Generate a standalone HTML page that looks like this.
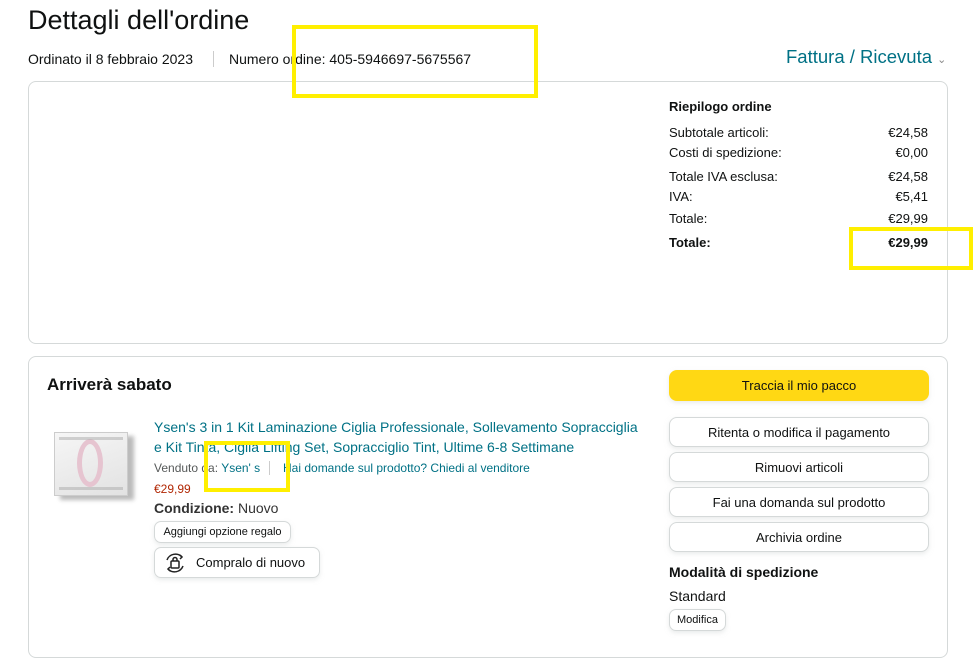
<!DOCTYPE html>
<html><head><meta charset="utf-8"><style>
*{margin:0;padding:0;box-sizing:border-box}
body{width:974px;height:668px;background:#fff;font-family:"Liberation Sans",Arial,sans-serif;color:#0f1111;position:relative;overflow:hidden;font-size:14px}
.a{position:absolute;white-space:nowrap}
.card{position:absolute;border:1px solid #d5d9d9;border-radius:8px;left:28px;width:920px}
.btn{position:absolute;left:669px;width:260px;height:30px;border:1px solid #d5d9d9;border-radius:8px;text-align:center;line-height:29px;font-size:13px;box-shadow:0 2px 5px rgba(213,217,217,.5);background:#fff}
.yb{position:absolute;border:4px solid #ffef00}
.teal{color:#007185}
</style></head><body>
<div class="a" style="left:28px;top:5px;font-size:27px;color:#0f1111">Dettagli dell'ordine</div>
<div class="a" style="left:28px;top:51px;font-size:14px">Ordinato il 8 febbraio 2023</div>
<div class="a" style="left:213px;top:51px;width:1px;height:16px;background:#ccc"></div>
<div class="a" style="left:229px;top:51px;font-size:14px">Numero ordine: 405-5946697-5675567</div>
<div class="a teal" style="left:786px;top:46px;font-size:18.5px">Fattura / Ricevuta <span style="font-size:11px;color:#888">&#8964;</span></div>

<div class="card" style="top:81px;height:263px"></div>
<div class="a" style="left:669px;top:99px;font-size:13px;font-weight:bold">Riepilogo ordine</div>
<div class="a" style="left:669px;top:123px;font-size:13px;line-height:20px">Subtotale articoli:<br>Costi di spedizione:</div>
<div class="a" style="right:46px;top:123px;font-size:13px;line-height:20px;text-align:right">€24,58<br>€0,00</div>
<div class="a" style="left:669px;top:167px;font-size:13px;line-height:20px">Totale IVA esclusa:<br>IVA:</div>
<div class="a" style="right:46px;top:167px;font-size:13px;line-height:20px;text-align:right">€24,58<br>€5,41</div>
<div class="a" style="left:669px;top:211px;font-size:13px">Totale:</div>
<div class="a" style="right:46px;top:211px;font-size:13px">€29,99</div>
<div class="a" style="left:669px;top:235px;font-size:13px;font-weight:bold">Totale:</div>
<div class="a" style="right:46px;top:235px;font-size:13px;font-weight:bold">€29,99</div>

<div class="card" style="top:356px;height:302px"></div>
<div class="a" style="left:47px;top:375px;font-size:17px;font-weight:bold">Arriverà sabato</div>
<div class="a" style="left:54px;top:432px;width:74px;height:64px;background:linear-gradient(160deg,#f6f6f6,#e2e2e2);border:1px solid #ccc;box-shadow:6px 4px 4px #bbb">
<div style="position:absolute;left:22px;top:6px;width:26px;height:48px;border:5px solid #e6c4d0;border-radius:50%"></div>
<div style="position:absolute;left:4px;top:4px;width:64px;height:3px;background:#aaa;opacity:.5"></div>
<div style="position:absolute;left:4px;top:54px;width:64px;height:3px;background:#aaa;opacity:.5"></div></div>
<div class="a teal" style="left:154px;top:417px;font-size:14px;line-height:20px">Ysen's 3 in 1 Kit Laminazione Ciglia Professionale, Sollevamento Sopracciglia<br>e Kit Tinta, Ciglia Lifting Set, Sopracciglio Tint, Ultime 6-8 Settimane</div>
<div class="a" style="left:154px;top:461px;font-size:12px;color:#565959">Venduto da: <span class="teal">Ysen' s</span></div>
<div class="a" style="left:269px;top:461px;width:1px;height:14px;background:#ccc"></div>
<div class="a teal" style="left:283px;top:461px;font-size:12px">Hai domande sul prodotto? Chiedi al venditore</div>
<div class="a" style="left:154px;top:482px;font-size:12px;color:#b12704">€29,99</div>
<div class="a" style="left:154px;top:500px;font-size:14px;color:#333"><b>Condizione:</b> Nuovo</div>
<div class="a" style="left:154px;top:521px;width:137px;height:22px;border:1px solid #d5d9d9;border-radius:7px;font-size:11px;line-height:21px;text-align:center;box-shadow:0 2px 4px rgba(213,217,217,.5)">Aggiungi opzione regalo</div>
<div class="a" style="left:154px;top:547px;width:166px;height:31px;border:1px solid #d5d9d9;border-radius:7px;font-size:13px;line-height:30px;padding-left:41px;box-shadow:0 2px 4px rgba(213,217,217,.5)">Compralo di nuovo</div>
<svg class="a" style="left:163px;top:551px" width="24" height="24" viewBox="0 0 24 24" fill="none" stroke="#222" stroke-width="1.5"><path d="M4 9a9 9 0 0 1 15-3"/><path d="M20 15a9 9 0 0 1-15 3"/><path d="M17 4l2 2-2 2"/><path d="M7 20l-2-2 2-2"/><rect x="8" y="10" width="8" height="7" rx="1"/><path d="M10 10V8.5a2 2 0 0 1 4 0V10"/></svg>

<div class="a" style="left:669px;top:370px;width:260px;height:31px;background:#ffd814;border-radius:8px;text-align:center;line-height:32px;font-size:13px;box-shadow:0 2px 5px rgba(213,217,217,.5)">Traccia il mio pacco</div>
<div class="btn" style="top:417px">Ritenta o modifica il pagamento</div>
<div class="btn" style="top:452px">Rimuovi articoli</div>
<div class="btn" style="top:487px">Fai una domanda sul prodotto</div>
<div class="btn" style="top:522px">Archivia ordine</div>
<div class="a" style="left:669px;top:564px;font-size:14px;font-weight:bold">Modalità di spedizione</div>
<div class="a" style="left:669px;top:588px;font-size:14px">Standard</div>
<div class="a" style="left:669px;top:609px;width:57px;height:22px;border:1px solid #d5d9d9;border-radius:7px;font-size:11px;line-height:21px;text-align:center;box-shadow:0 2px 4px rgba(213,217,217,.5)">Modifica</div>

<div class="yb" style="left:292px;top:25px;width:246px;height:73px"></div>
<div class="yb" style="left:849px;top:227px;width:124px;height:43px"></div>
<div class="yb" style="left:204px;top:441px;width:86px;height:51px"></div>
</body></html>
